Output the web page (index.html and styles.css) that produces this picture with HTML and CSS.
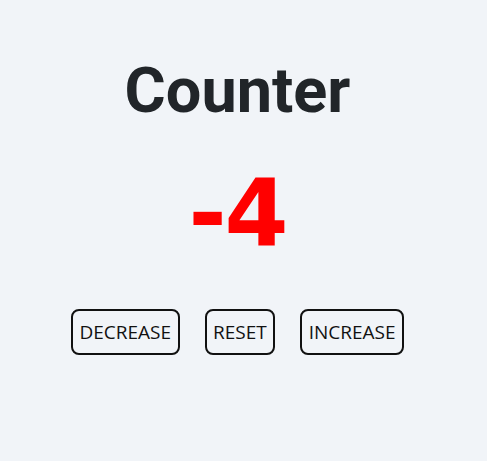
FILE: index.html
```html
<!DOCTYPE html>
<html>
<head>
<meta charset="utf-8">
<link rel="stylesheet" href="styles.css">
</head>
<body>
<main class="app">
  <h1 class="title">Counter</h1>
  <div class="count">-4</div>
  <div class="buttons">
    <button class="btn">DECREASE</button>
    <button class="btn">RESET</button>
    <button class="btn">INCREASE</button>
  </div>
</main>
</body>
</html>
```
FILE: styles.css
```css
html, body {
  margin: 0;
  padding: 0;
  background: #f1f4f8;
}
.app {
  display: flex;
  flex-direction: column;
  align-items: center;
  width: 475px;
  padding-top: 53px;
}
.title {
  margin: 0;
  font-family: Roboto, sans-serif;
  font-weight: 700;
  font-size: 63px;
  line-height: 76px;
  color: #212529;
}
.count {
  margin-top: 31px;
  font-family: "DejaVu Sans", sans-serif;
  font-weight: 700;
  font-size: 92px;
  line-height: 107px;
  letter-spacing: -2px;
  color: #ff0000;
}
.buttons {
  display: flex;
  gap: 25px;
  margin-top: 42px;
}
.btn {
  font-family: "Open Sans", sans-serif;
  font-size: 19px;
  color: #111;
  background: transparent;
  border: 2px solid #111;
  border-radius: 8px;
  height: 46px;
  padding: 0 6.5px;
}
```
